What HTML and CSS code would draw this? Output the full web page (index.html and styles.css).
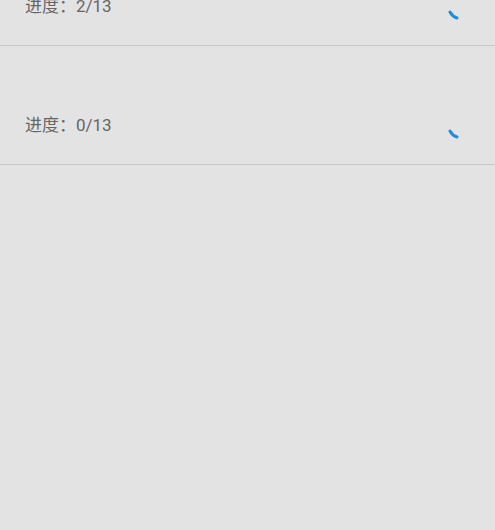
FILE: index.html
```html
<!DOCTYPE html>
<html lang="zh-CN">
<head>
    <meta charset="UTF-8">
    <meta name="viewport" content="width=device-width, initial-scale=1.0">
    <title>任务进度</title>
    <link rel="stylesheet" href="styles.css">
</head>
<body>
    <main class="task-list">
        <!-- 任务行 -->
        <div class="task-row">
            <span class="task-progress">进度：2/13</span>
            <svg class="spinner" width="12" height="10" viewBox="0 0 12 10">
                <path d="M2 2 A12 12 0 0 0 9 8" />
            </svg>
        </div>
        <div class="task-row">
            <span class="task-progress">进度：0/13</span>
            <svg class="spinner" width="12" height="10" viewBox="0 0 12 10">
                <path d="M2 2 A12 12 0 0 0 9 8" />
            </svg>
        </div>
    </main>
</body>
</html>
```

FILE: styles.css
```css
/* General Styling */
html, body {
    height: 100%;
}

body {
    margin: 0;
    background-color: #e4e3e3;
    font-family: Roboto, "Noto Sans CJK SC", sans-serif;
    overflow: hidden;
}

/* List scrolled so the first row is cut off at the top */
.task-list {
    margin-top: -73px;
}

.task-row {
    box-sizing: border-box;
    height: 119px;
    padding: 40px 35px 0 25px;
    display: flex;
    align-items: center;
    justify-content: space-between;
    border-bottom: 1px solid #c9c8c8;
}

.task-progress {
    font-size: 17px;
    line-height: 24px;
    color: #666666;
}

.spinner {
    margin-top: 18px;
}

.spinner path {
    fill: none;
    stroke: #1e8ddd;
    stroke-width: 3;
    stroke-linecap: round;
}
```
